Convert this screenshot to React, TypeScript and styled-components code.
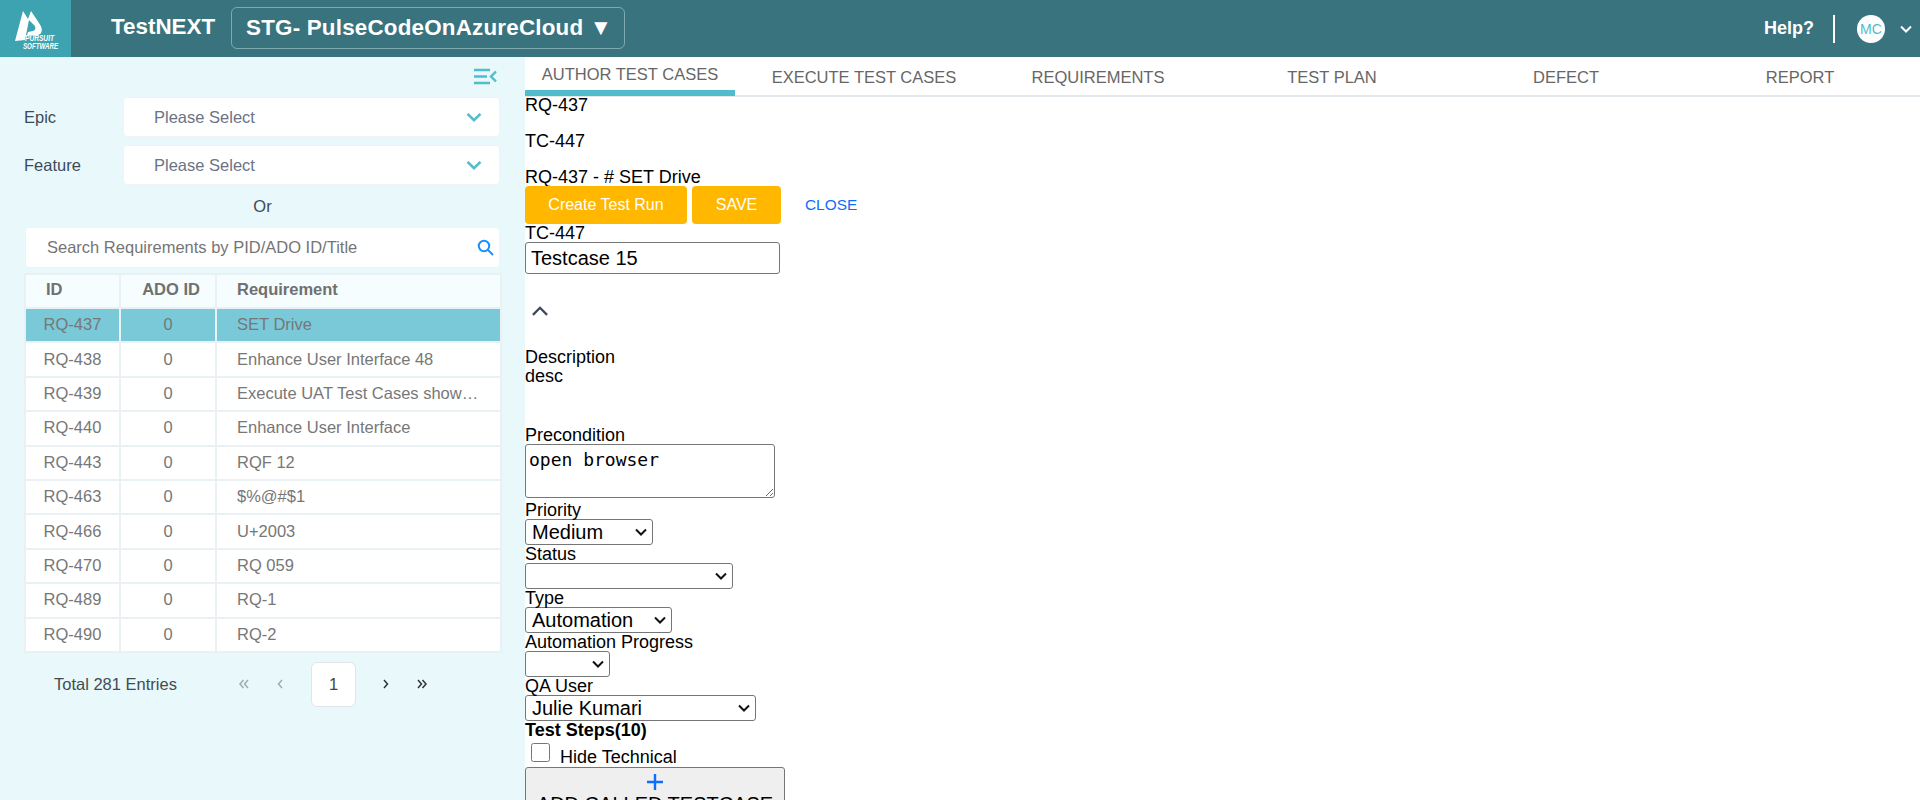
import styled, { createGlobalStyle } from 'styled-components';

const GlobalStyle = createGlobalStyle`
  html, body {
    margin: 0;
    height: 800px;
    overflow: hidden;
    background: #fff;
    font-family: "Liberation Sans", Arial, sans-serif;
  }
  * { box-sizing: border-box; }
`;

const selectArrow =
  "url(\"data:image/svg+xml,%3Csvg xmlns='http://www.w3.org/2000/svg' width='12' height='8' viewBox='0 0 12 8' fill='none' stroke='%23111' stroke-width='2'%3E%3Cpath d='M1 1.5 L6 6.5 L11 1.5'/%3E%3C/svg%3E\")";

const Page = styled.div`
  width: 1920px;
  height: 800px;
  overflow: hidden;
  display: flex;
  flex-direction: column;
`;

const Header = styled.header`
  height: 57px;
  flex: none;
  background: #38737e;
  display: flex;
  align-items: center;
  color: #fff;
`;

const LogoBox = styled.div`
  width: 71px;
  height: 57px;
  background: #3da3b0;
  flex: none;
`;

const Brand = styled.div`
  margin-left: 40px;
  margin-top: -3px;
  font-size: 22.4px;
  font-weight: 700;
  width: 105px;
  white-space: nowrap;
`;

const ProjectPicker = styled.div`
  margin-left: 15px;
  width: 394px;
  margin-top: -1px;
  height: 42px;
  border: 1px solid #7fa8b0;
  border-radius: 6px;
  display: flex;
  align-items: center;
  padding-left: 14px;
  font-size: 22.4px;
  font-weight: 700;
  letter-spacing: 0.2px;
  white-space: nowrap;
`;

const HeaderRight = styled.div`
  margin-left: auto;
  display: flex;
  align-items: center;
  padding-right: 7px;
`;

const HelpLink = styled.span`
  font-size: 18px;
  font-weight: 700;
`;

const Divider = styled.span`
  width: 2px;
  height: 28px;
  background: #fff;
  margin: 0 22px 0 19px;
`;

const Avatar = styled.span`
  width: 28px;
  height: 28px;
  border-radius: 50%;
  background: #fff;
  color: #4fbdcc;
  font-size: 14px;
  display: flex;
  align-items: center;
  justify-content: center;
  margin-right: 14px;
`;

const Body = styled.div`
  flex: 1;
  display: flex;
  min-height: 0;
`;

const Sidebar = styled.aside`
  width: 525px;
  flex: none;
  background: #e9f8fa;
  padding: 0 25px;
  display: flex;
  flex-direction: column;
  font-size: 16.5px;
`;

const CollapseRow = styled.div`
  height: 40px;
  display: flex;
  justify-content: flex-end;
  align-items: center;
  padding: 0 3px 2px 0;
`;

const FilterRow = styled.div`
  display: flex;
  align-items: center;
  height: 40px;
  margin-bottom: 8px;
`;

const FilterLabel = styled.label`
  width: 99px;
  margin-left: -1px;
  color: #3c4a5c;
`;

const FakeSelect = styled.div`
  flex: 1;
  height: 40px;
  background: #fff;
  border: 1px solid #eef4f6;
  border-radius: 4px;
  display: flex;
  align-items: center;
  justify-content: space-between;
  padding: 0 16px 0 30px;
  color: #6b7385;
`;

const OrText = styled.div`
  text-align: center;
  color: #3c4a5c;
  height: 35px;
  margin-top: -1px;
  line-height: 28px;
`;

const SearchBox = styled.div`
  height: 41px;
  background: #fff;
  border: 1px solid #eef4f6;
  border-radius: 4px;
  display: flex;
  align-items: center;
  justify-content: space-between;
  padding: 0 5px 0 21px;
  color: #757575;
`;

const Table = styled.table`
  width: 476px;
  margin: 5px 0 0 -1px;
  border-collapse: collapse;
  table-layout: fixed;
  color: #777;
`;

const HeadCell = styled.th<{ $w: number; $center?: boolean }>`
  width: ${p => p.$w}px;
  height: 34px;
  background: #f5fdfe;
  border: 2px solid #eaf1f4;
  font-weight: 700;
  color: #707070;
  text-align: ${p => (p.$center ? 'center' : 'left')};
  padding: 0 0 3px ${p => (p.$center ? 6 : 20)}px;
`;

const Row = styled.tr<{ $active?: boolean }>`
  height: 34.4px;
  background: ${p => (p.$active ? '#7ac9d8' : '#fff')};
`;

const Cell = styled.td<{ $center?: boolean }>`
  border: 2px solid #eaf1f4;
  padding: ${p => (p.$center ? '0 0 1px' : '0 20px 1px')};
  text-align: ${p => (p.$center ? 'center' : 'left')};
  white-space: nowrap;
  overflow: hidden;
  text-overflow: ellipsis;
`;

const Pager = styled.div`
  display: flex;
  align-items: center;
  height: 45px;
  margin-top: 9px;
  padding-left: 29px;
`;

const TotalText = styled.span`
  width: 172px;
  color: #444b50;
`;

const PagerArrow = styled.span<{ $off?: boolean }>`
  width: 36px;
  display: flex;
  justify-content: center;
  color: ${p => (p.$off ? '#9fadb3' : '#2f3538')};
`;

const PageBox = styled.span`
  width: 45px;
  height: 45px;
  margin: 0 12px 0 13px;
  background: #fff;
  border: 1px solid #dfe5e8;
  border-radius: 6px;
  display: flex;
  align-items: center;
  justify-content: center;
  color: #444;
`;

const Main = styled.main`
  flex: 1;
  min-width: 0;
  color: #000;
  font-size: 18px;
  line-height: 18px;
`;

const TabBar = styled.nav`
  height: 40px;
  margin-bottom: -1px;
  display: flex;
  border-bottom: 2px solid #e3e8ec;
`;

const Tab = styled.div<{ $active?: boolean }>`
  flex: none;
  width: ${p => (p.$active ? '210px' : '234px')};
  margin-right: ${p => (p.$active ? '12px' : '0')};
  height: ${p => (p.$active ? '39px' : '38px')};
  border-bottom: ${p => (p.$active ? '6px solid #4fbdcc' : 'none')};
  display: flex;
  align-items: center;
  justify-content: center;
  font-size: 16.5px;
  color: #666;
  padding-top: ${p => (p.$active ? '1px' : '1px')};
  white-space: nowrap;
`;

const PlainLine = styled.p<{ $gap?: boolean }>`
  margin: 0 0 ${p => (p.$gap ? 18 : 0)}px;
  height: 18px;
`;

const ButtonRow = styled.div`
  display: flex;
  align-items: center;
  height: 38px;
`;

const AmberButton = styled.button<{ $w: number }>`
  width: ${p => p.$w}px;
  height: 38px;
  margin-right: 5px;
  border: none;
  border-radius: 4px;
  background: #ffb700;
  color: #fff;
  font: 16px "Liberation Sans", Arial, sans-serif;
`;

const CloseLink = styled.a`
  margin-left: 19px;
  font-size: 15.4px;
  color: #0d6efd;
`;

const TitleInput = styled.input`
  display: block;
  width: 255px;
  height: 32px;
  border: 1px solid #767676;
  border-radius: 3px;
  padding: 0 5px;
  font: 20px "Liberation Sans", Arial, sans-serif;
  color: #000;
`;

const CollapseToggle = styled.div`
  height: 74px;
  padding-left: 6px;
  display: flex;
  align-items: center;
  color: #3c4a5c;
`;

const DescText = styled.div`
  height: 60px;
  padding-top: 1px;
`;

const PreconditionArea = styled.textarea`
  display: block;
  width: 250px;
  height: 54px;
  margin-bottom: 3px;
  border: 1px solid #767676;
  border-radius: 3px;
  padding: 5px 3px;
  font: 18px/20px "DejaVu Sans Mono", monospace;
  color: #000;
`;

const NativeSelect = styled.select<{ $w: number }>`
  display: block;
  appearance: none;
  width: ${p => p.$w}px;
  height: 26px;
  padding: 0 20px 0 6px;
  border: 1px solid #767676;
  border-radius: 3px;
  background: #fff ${selectArrow} no-repeat right 5px center;
  font: 20px "Liberation Sans", Arial, sans-serif;
  color: #000;
`;

const StepsTitle = styled.div`
  font-weight: 700;
  height: 18px;
`;

const HideRow = styled.label`
  display: flex;
  align-items: flex-start;
  height: 28px;
  padding-left: 6px;
`;

const HideCheck = styled.input`
  width: 19px;
  height: 19px;
  margin: 4px 10px 0 0;
`;

const HideText = styled.span`
  margin-top: 9px;
`;

const AddButton = styled.button`
  display: flex;
  flex-direction: column;
  align-items: center;
  justify-content: flex-start;
  width: 260px;
  height: 60px;
  padding: 6px 0 0;
  background: #efefef;
  border: 1px solid #767676;
  border-radius: 3px;
  color: #000;
  font: 20px/20px "Liberation Sans", Arial, sans-serif;
`;

const PlusMark = styled.span`
  display: flex;
  height: 20px;
  color: #0d6efd;
`;

const AddLabel = styled.span`
  white-space: nowrap;
`;

function Logo() {
  return (
    <svg width="71" height="57" viewBox="0 0 71 57">
      <path fill="#fff" d="M15 41 L23 11 L28 19 L31 11 L39 23 C44 30 42 35 36 35.500 L27 35.500 L28 32 L33 31 C36 30 36 27 34 25 L29 20 L25 40 Z" />
      <text x="25" y="41" fill="#fff" fontFamily="Liberation Sans" fontSize="8.500" fontWeight="700" fontStyle="italic" textLength="29" lengthAdjust="spacingAndGlyphs">PURSUIT</text>
      <text x="23" y="49" fill="#fff" fontFamily="Liberation Sans" fontSize="8.500" fontWeight="700" fontStyle="italic" textLength="35" lengthAdjust="spacingAndGlyphs">SOFTWARE</text>
    </svg>
  );
}

function Chevron({ color = '#4fbdcc', size = 18, up = false }: { color?: string; size?: number; up?: boolean }) {
  return (
    <svg width={size} height={size} viewBox="0 0 14 14" fill="none" stroke={color} strokeWidth={up ? 1.8 : 2}>
      <path d={up ? 'M1.500 10 L7 4.500 L12.500 10' : 'M2 4.500 L7 9.500 L12 4.500'} />
    </svg>
  );
}

function CollapseIcon() {
  return (
    <svg width="23" height="17" viewBox="0 0 23 17" fill="none" stroke="#4fbdcc" strokeWidth="2.400">
      <path d="M0 2 H16 M0 8.500 H13 M0 15 H16 M22 3.500 L17 8.500 L22 13.500" />
    </svg>
  );
}

function SearchIcon() {
  return (
    <svg width="17" height="17" viewBox="0 0 17 17" fill="none" stroke="#1890ff" strokeWidth="2">
      <circle cx="7" cy="7" r="5.200" />
      <path d="M11 11 L16 16" />
    </svg>
  );
}

function PagerIcon({ d }: { d: string }) {
  return (
    <svg width="12" height="12" viewBox="0 0 12 12" fill="none" stroke="currentColor" strokeWidth="1.500">
      <path d={d} />
    </svg>
  );
}

const rows = [
  ['RQ-437', 'SET Drive'],
  ['RQ-438', 'Enhance User Interface 48'],
  ['RQ-439', 'Execute UAT Test Cases showing results'],
  ['RQ-440', 'Enhance User Interface'],
  ['RQ-443', 'RQF 12'],
  ['RQ-463', '$%@#$1'],
  ['RQ-466', 'U+2003'],
  ['RQ-470', 'RQ 059'],
  ['RQ-489', 'RQ-1'],
  ['RQ-490', 'RQ-2'],
];

const tabs = ['AUTHOR TEST CASES', 'EXECUTE TEST CASES', 'REQUIREMENTS', 'TEST PLAN', 'DEFECT', 'REPORT'];

function App() {
  return (
    <Page>
      <GlobalStyle />
      <Header>
        <LogoBox><Logo /></LogoBox>
        <Brand>TestNEXT</Brand>
        <ProjectPicker>STG- PulseCodeOnAzureCloud ▼</ProjectPicker>
        <HeaderRight>
          <HelpLink>Help?</HelpLink>
          <Divider />
          <Avatar>MC</Avatar>
          <Chevron color="#fff" size={14} />
        </HeaderRight>
      </Header>
      <Body>
        <Sidebar>
          <CollapseRow><CollapseIcon /></CollapseRow>
          <FilterRow>
            <FilterLabel>Epic</FilterLabel>
            <FakeSelect>Please Select<Chevron /></FakeSelect>
          </FilterRow>
          <FilterRow>
            <FilterLabel>Feature</FilterLabel>
            <FakeSelect>Please Select<Chevron /></FakeSelect>
          </FilterRow>
          <OrText>Or</OrText>
          <SearchBox>Search Requirements by PID/ADO ID/Title<SearchIcon /></SearchBox>
          <Table>
            <thead>
              <tr>
                <HeadCell $w={95}>ID</HeadCell>
                <HeadCell $w={96} $center>ADO ID</HeadCell>
                <HeadCell $w={285}>Requirement</HeadCell>
              </tr>
            </thead>
            <tbody>
              {rows.map(([id, title], i) => (
                <Row key={id} $active={i === 0}>
                  <Cell $center>{id}</Cell>
                  <Cell $center>0</Cell>
                  <Cell>{title}</Cell>
                </Row>
              ))}
            </tbody>
          </Table>
          <Pager>
            <TotalText>Total 281 Entries</TotalText>
            <PagerArrow $off><PagerIcon d="M5.500 2 L2 6 L5.500 10 M10 2 L6.500 6 L10 10" /></PagerArrow>
            <PagerArrow $off><PagerIcon d="M8 2 L4.500 6 L8 10" /></PagerArrow>
            <PageBox>1</PageBox>
            <PagerArrow><PagerIcon d="M4 2 L7.500 6 L4 10" /></PagerArrow>
            <PagerArrow><PagerIcon d="M2 2 L5.500 6 L2 10 M6.500 2 L10 6 L6.500 10" /></PagerArrow>
          </Pager>
        </Sidebar>
        <Main>
          <TabBar>
            {tabs.map((t, i) => <Tab key={t} $active={i === 0}>{t}</Tab>)}
          </TabBar>
          <PlainLine $gap>RQ-437</PlainLine>
          <PlainLine $gap>TC-447</PlainLine>
          <PlainLine>RQ-437 - # SET Drive</PlainLine>
          <ButtonRow>
            <AmberButton $w={162}>Create Test Run</AmberButton>
            <AmberButton $w={89}>SAVE</AmberButton>
            <CloseLink>CLOSE</CloseLink>
          </ButtonRow>
          <PlainLine>TC-447</PlainLine>
          <TitleInput defaultValue="Testcase 15" />
          <CollapseToggle><Chevron color="#3c4a5c" size={18} up /></CollapseToggle>
          <PlainLine>Description</PlainLine>
          <DescText>desc</DescText>
          <PlainLine>Precondition</PlainLine>
          <PreconditionArea defaultValue="open browser" />
          <PlainLine>Priority</PlainLine>
          <NativeSelect $w={128} defaultValue="Medium"><option>Medium</option></NativeSelect>
          <PlainLine>Status</PlainLine>
          <NativeSelect $w={208}><option></option></NativeSelect>
          <PlainLine>Type</PlainLine>
          <NativeSelect $w={147} defaultValue="Automation"><option>Automation</option></NativeSelect>
          <PlainLine>Automation Progress</PlainLine>
          <NativeSelect $w={85}><option></option></NativeSelect>
          <PlainLine>QA User</PlainLine>
          <NativeSelect $w={231} defaultValue="Julie Kumari"><option>Julie Kumari</option></NativeSelect>
          <StepsTitle>Test Steps(10)</StepsTitle>
          <HideRow>
            <HideCheck type="checkbox" />
            <HideText>Hide Technical</HideText>
          </HideRow>
          <AddButton>
            <PlusMark>
              <svg width="16" height="16" viewBox="0 0 16 16" fill="none" stroke="currentColor" strokeWidth="2.400">
                <path d="M8 0 V16 M0 8 H16" />
              </svg>
            </PlusMark>
            <AddLabel>ADD CALLED TESTCASE</AddLabel>
          </AddButton>
        </Main>
      </Body>
    </Page>
  );
}

export default App;
